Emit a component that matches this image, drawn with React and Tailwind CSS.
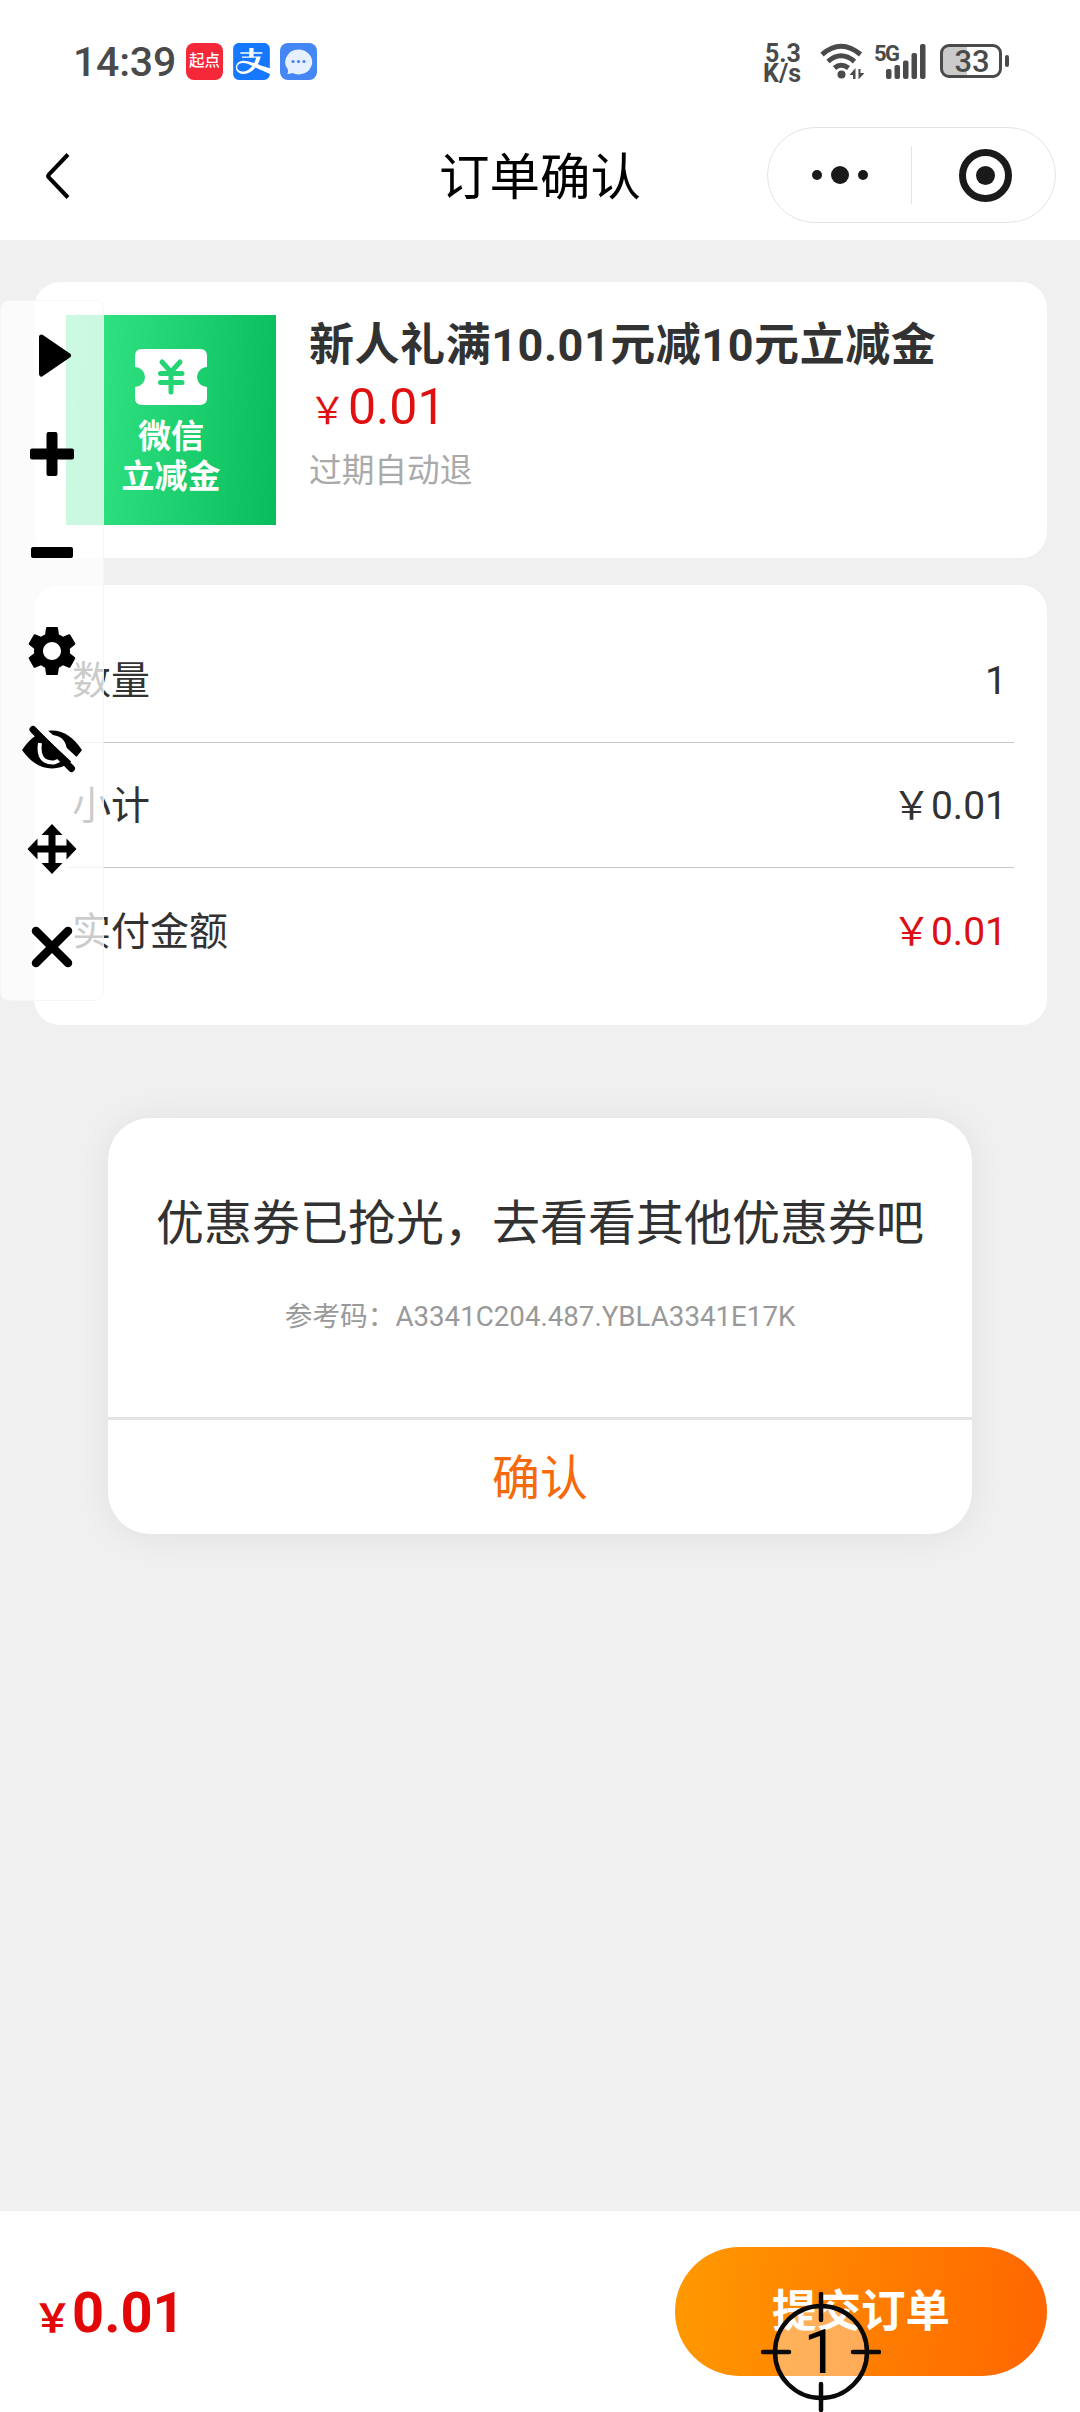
import { MdSettings } from 'react-icons/md'
import { SiAlipay } from 'react-icons/si'

const rows = [
  { label: '数量', value: '1' },
  { label: '小计', value: '￥0.01' },
  { label: '实付金额', value: '￥0.01', red: true },
]

const StatusBar = () => (
  <div className='h-[110px] pt-[43px] pl-[73px] pr-[71px] flex justify-between items-start text-[#4a4a4a]'>
    <div className='flex h-[37px] items-center'>
      <div className='w-[113px] pt-[2px] text-[41px] font-medium leading-[37px] tracking-[-0.2px]'>14:39</div>
      <div className='flex gap-[10px]'>
        <div className='size-[37px] rounded-lg bg-[#f5283a] text-white text-[15.5px] font-medium flex justify-center items-center leading-none'>起点</div>
        <div className='size-[37px] rounded-lg bg-white'>
          <SiAlipay className='size-[37px] text-[#1677ff]' />
        </div>
        <div className='size-[37px] rounded-lg bg-[#4486f4]'>
          <svg viewBox='0 0 37 37' className='size-full'>
            <path d='M18.5 6.5a13.5 12.5 0 1 1-6 23.6Q10 31 7.3 31Q8.500 28.500 7.800 26.300A13.500 12.500 0 0 1 18.500 6.500Z' fill='#e6f0ff' />
            <circle cx='13' cy='18.500' r='1.600' fill='#4486f4' />
            <circle cx='18.500' cy='18.500' r='1.600' fill='#4486f4' />
            <circle cx='24' cy='18.500' r='1.600' fill='#4486f4' />
          </svg>
        </div>
      </div>
    </div>
    <div className='flex items-start'>
      <div className='w-[57px] pt-[1px] text-[25px] leading-[20px] font-bold'>
        <div className='pl-[2px]'>5.3</div>
        <div>K/s</div>
      </div>
      <svg viewBox='0 0 44 36' className='w-[44px] h-[36px]' fill='none' stroke='currentColor' strokeWidth='5'>
        <path d='M2 11.500Q21 -5 40.500 11.500' />
        <path d='M8 18.500Q21 7 34.500 18.500' />
        <path d='M14.500 25Q21 19.500 28.500 25' />
        <circle cx='21.500' cy='31.500' r='4' fill='currentColor' stroke='none' />
        <path d='M29.500 32l6-7v12h-2.500v-5zM44.500 30l-6 6.500V26h2v4z' fill='currentColor' stroke='none' />
      </svg>
      <div className='ml-[10px] w-[12px] pt-[1px] text-[22px] leading-[20px] font-bold tracking-[-1.500px] whitespace-nowrap'>5G</div>
      <svg viewBox='0 0 42 36' className='w-[42px] h-[36px]' fill='currentColor'>
        <rect x='0' y='26' width='5.500' height='10' rx='2' />
        <rect x='8.500' y='22' width='5.500' height='14' rx='2' />
        <rect x='17' y='17.500' width='5.500' height='18.500' rx='2' />
        <rect x='25.500' y='10' width='5.500' height='26' rx='2' />
        <rect x='34' y='1' width='5.500' height='35' rx='2' />
      </svg>
      <div className='ml-[12px] mt-[1px] w-[62px] h-[34px] rounded-[9px] border-[3px] border-[#4a4a4a] bg-linear-to-r from-[#cbcbcb] from-42% to-white to-42% text-[31px] leading-[30px] font-medium text-center pl-[2px]'>33</div>
      <div className='ml-[3px] mt-[12px] w-[4px] h-[12px] rounded-[2px] bg-[#4a4a4a]' />
    </div>
  </div>
)

const NavBar = () => (
  <div className='relative h-[130px] flex justify-center'>
    <svg viewBox='0 0 24 46' className='absolute left-[46px] top-[43px] w-[24px] h-[46px]' fill='none' stroke='#000' strokeWidth='4'>
      <path d='M22 1.500L2.800 21.500Q1.500 23 2.800 24.500L22 44.500' />
    </svg>
    <div className='pt-[3px] text-[50.500px] leading-[130px] text-black'>订单确认</div>
    <div className='absolute left-[767px] top-[17px] w-[289px] h-[96px] rounded-full border border-[#e4e4e4] flex items-center'>
      <div className='w-[143px] flex justify-center items-center gap-[9px]'>
        <div className='size-[10px] rounded-full bg-[#1a1a1a]' />
        <div className='size-[18px] rounded-full bg-[#1a1a1a]' />
        <div className='size-[10px] rounded-full bg-[#1a1a1a]' />
      </div>
      <div className='w-px h-[58px] bg-[#e4e4e4]' />
      <div className='flex-1 flex justify-center pl-[4px]'>
        <div className='size-[53px] rounded-full border-[7px] border-[#1a1a1a] flex justify-center items-center'>
          <div className='size-[19px] rounded-full bg-[#1a1a1a]' />
        </div>
      </div>
    </div>
  </div>
)

const Coupon = () => (
  <div className='size-[210px] bg-linear-[95deg] from-[#38e889] to-[#08bd5c] flex flex-col items-center pt-[34px] text-white font-bold'>
    <svg viewBox='0 0 72 56' className='w-[72px] h-[56px]'>
      <path d='M7 0H65Q72 0 72 7V18A10 10 0 0 0 72 38V49Q72 56 65 56H7Q0 56 0 49V38A10 10 0 0 0 0 18V7Q0 0 7 0Z' fill='#fff' />
      <path d='M27 13L36 23L45 13M36 23V43M25.500 24.500H47M25.500 33.500H47' fill='none' stroke='#25d472' strokeWidth='5' strokeLinecap='round' />
    </svg>
    <div className='mt-[12px] text-[33px] leading-[40px] text-center'>
      <div>微信</div>
      <div>立减金</div>
    </div>
  </div>
)

const ToolPanel = () => (
  <div className='absolute left-0 top-[300px] w-[104px] h-[701px] rounded-[9px] bg-white/75 border border-[#eef1f1]/60 flex flex-col justify-between items-center py-[24px] text-black'>
    <svg viewBox='0 0 60 60' className='size-[60px]'>
      <path d='M19.500 12L46.500 30.500L19.500 49Z' stroke='#000' strokeWidth='5' strokeLinejoin='round' />
    </svg>
    <svg viewBox='0 0 60 60' className='size-[60px]'>
      <rect x='24.500' y='8' width='11' height='44' rx='2' />
      <rect x='8' y='24.500' width='44' height='11' rx='2' />
    </svg>
    <svg viewBox='0 0 60 60' className='size-[60px]'>
      <rect x='9' y='25' width='42' height='11' rx='2' />
    </svg>
    <MdSettings className='size-[60px]' />
    <svg viewBox='0 0 60 60' className='size-[60px]'>
      <path d='M0 31Q13 11.500 30 11.500T60 31Q47 49.500 30 49.500T0 31Z' />
      <path d='M27 18Q42 17 43 32M18 24Q15 44 32 43.500L38 41' fill='none' stroke='#fff' strokeWidth='4' />
      <path d='M15 6L58 46' stroke='#fff' strokeWidth='7' />
      <path d='M11 10.500L49.500 49.500' stroke='#000' strokeWidth='7' strokeLinecap='round' />
    </svg>
    <svg viewBox='0 0 60 60' className='size-[60px]'>
      <path d='M30 6L40.500 17H33.500V27.500H44.500V20.500L54.500 31L44.500 41.500V34.500H33.500V45H40.500L30 56L19.500 45H26.500V34.500H15.500V41.500L5.500 31L15.500 20.500V27.500H26.500V17H19.500Z' />
    </svg>
    <svg viewBox='0 0 60 60' className='size-[60px]'>
      <path d='M14 15L46 47M46 15L14 47' stroke='#000' strokeWidth='8.500' strokeLinecap='round' />
    </svg>
  </div>
)

const ClickTarget = () => (
  <div className='absolute left-[761px] top-[2292px] size-[120px] flex justify-center items-center'>
    <svg viewBox='0 0 120 120' className='absolute size-[120px]' stroke='#0a0a0a' strokeWidth='4.500' strokeLinecap='round'>
      <circle cx='60' cy='60' r='46' fill='#fff' fillOpacity='0.35' />
      <path d='M60 2V28M60 92V118M2 60H28M92 60H118' />
    </svg>
    <span className='relative text-[61px] leading-[120px] text-black'>1</span>
  </div>
)

const App = () => {
  return (
    <div className="relative w-[1080px] h-[2412px] overflow-hidden bg-[#f0f0f0] font-['Roboto','Noto_Sans_CJK_SC',sans-serif] text-[#323232] flex flex-col">
      <div className='bg-white'>
        <StatusBar />
        <NavBar />
      </div>

      <div className='mt-[42px] mx-[34px] w-[1013px] h-[276px] rounded-[26px] bg-white flex pt-[33px] pl-[32px]'>
        <Coupon />
        <div className='pl-[33px] pt-[3px]'>
          <div className='text-[45px] leading-[56px] font-bold tracking-[0.550px] whitespace-nowrap'>新人礼满10.01元减10元立减金</div>
          <div className='text-[#e01010] text-[50px] leading-[66px] flex items-baseline'>
            <span className='text-[37px]'>￥</span>
            <span className='pl-[2px]'>0.01</span>
          </div>
          <div className='-mt-[2px] text-[32.700px] leading-[56px] text-[#aaa]'>过期自动退</div>
        </div>
      </div>

      <div className='mt-[27px] mx-[34px] w-[1013px] h-[440px] rounded-[26px] bg-white px-[33px] pt-[33px]'>
        {rows.map((row, i) => (
          <div
            key={row.label}
            className={`h-[125px] pt-[3px] pl-[5px] pr-[7px] flex justify-between items-center text-[39px] ${i < rows.length - 1 ? 'border-b border-[#c8c8c8]' : ''}`}
          >
            <span>{row.label}</span>
            <span className={row.red ? 'text-[#dc0f14]' : ''}>{row.value}</span>
          </div>
        ))}
      </div>

      <div className='mt-[93px] mx-auto w-[864px] h-[416px] rounded-[42px] bg-white shadow-[0_2px_34px_rgba(0,0,0,0.07)] text-center'>
        <div className='h-[302px] pt-[71px] border-b-[3px] border-[#e5e5e5]'>
          <div className='text-[48px] leading-[70px]'>优惠券已抢光，去看看其他优惠券吧</div>
          <div className='mt-[37px] text-[27.700px] leading-[42px] text-[#999]'>参考码：A3341C204.487.YBLA3341E17K</div>
        </div>
        <div className='pt-[2px] text-[48px] leading-[114px] text-[#f56a0c]'>确认</div>
      </div>

      <div className='mt-auto h-[201px] bg-white flex justify-between items-start pt-[36px] px-[33px]'>
        <div className='pt-[2px] flex items-baseline text-[#e30808] text-[56px] leading-[129px] font-bold'>
          <span className='text-[39px]'>￥</span>0.01
        </div>
        <div className='w-[372px] h-[129px] rounded-full bg-linear-[95deg] from-[#ff9900] to-[#ff6600] text-white text-[44.500px] leading-[131px] font-bold text-center'>提交订单</div>
      </div>

      <ToolPanel />
      <ClickTarget />
    </div>
  )
}

export default App
